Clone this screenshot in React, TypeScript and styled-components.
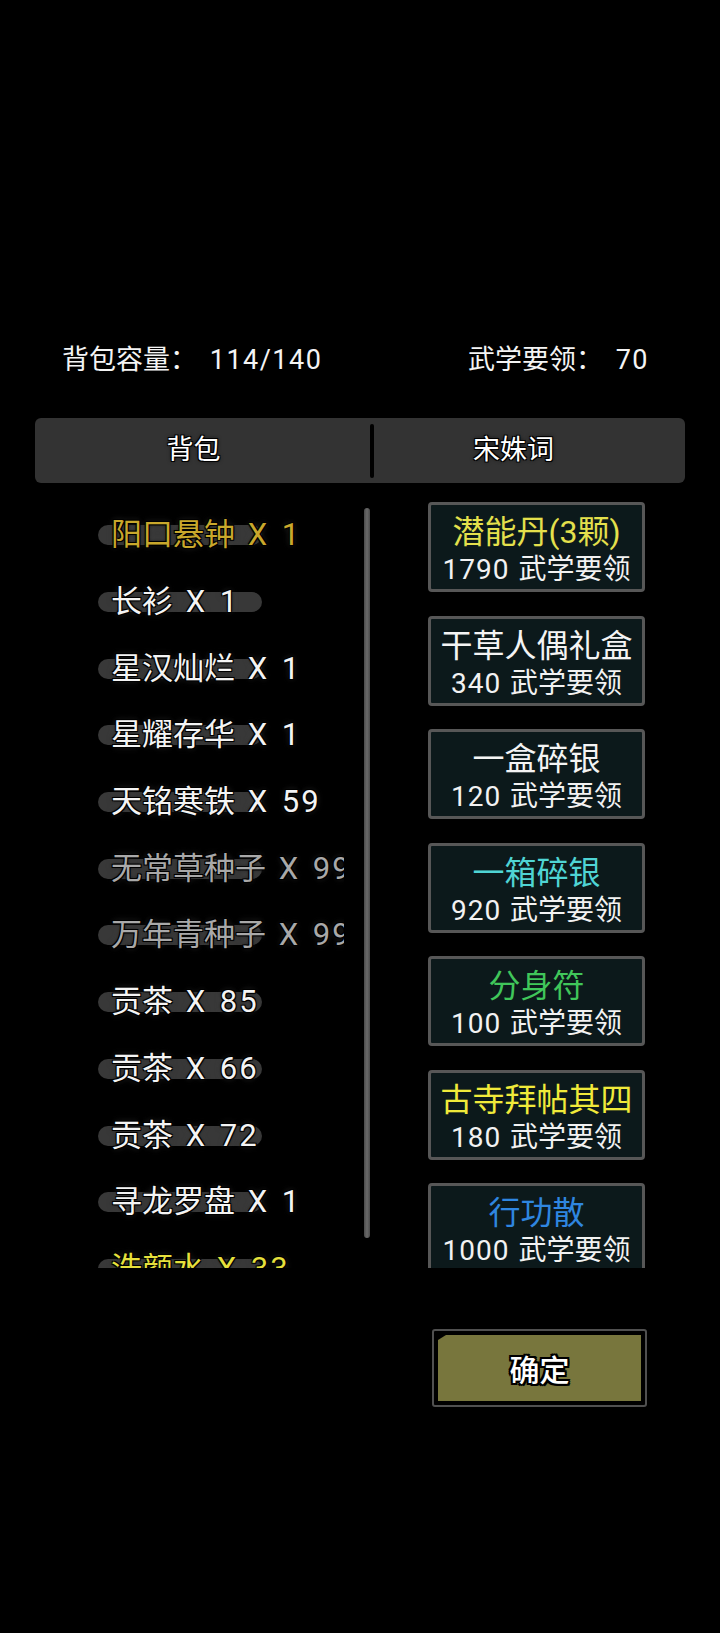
import styled, { createGlobalStyle } from 'styled-components'

const GlobalStyle = createGlobalStyle`
  html, body {
    margin: 0;
    padding: 0;
    background: #000;
  }
  body {
    font-family: Roboto, "Noto Sans CJK SC", sans-serif;
    color: #f2f2f2;
  }
  * { box-sizing: border-box; }
`

const outline = '1px 1px 0 #000, -1px -1px 0 #000, 1px -1px 0 #000, -1px 1px 0 #000, 0 0 4px rgba(0, 0, 0, 0.9)'

const Screen = styled.div`
  width: 720px;
  height: 1633px;
  background: #000;
  padding-top: 342px;
`

const InfoRow = styled.div`
  display: flex;
  justify-content: space-between;
  padding: 0 71px 0 62px;
  font-size: 27px;
  line-height: 36px;
  color: #f4f4f4;
  word-spacing: 6px;
`

// latin digits in the game font run wider than Roboto
const Num = styled.span<{ $track: number }>`
  letter-spacing: ${({ $track }) => $track}px;
`

const TabBar = styled.div`
  margin: 40px 35px 0;
  height: 65px;
  display: grid;
  grid-template-columns: 335px 4px 1fr;
  align-items: center;
  background: #333;
  border-radius: 6px;
`

const Tab = styled.div<{ $shift: number }>`
  text-align: center;
  font-size: 27px;
  line-height: 65px;
  padding-right: ${({ $shift }) => $shift}px;
  color: #fff;
  text-shadow: ${outline};
`

const TabDivider = styled.div`
  height: 54px;
  background: #000;
  border-radius: 2px;
`

const Body = styled.div`
  display: flex;
  margin-top: 19px;
  padding-left: 98px;
`

const ItemViewport = styled.div`
  width: 246px;
  height: 766px;
  overflow: hidden;
`

const ItemRow = styled.div`
  display: grid;
  height: 66.7px;
  align-items: center;
`

const ItemPill = styled.div`
  grid-area: 1 / 1;
  width: 164px;
  height: 20px;
  border-radius: 10px;
  background: #383838;
`

const ItemName = styled.div<{ $color: string }>`
  grid-area: 1 / 1;
  margin-left: 13px;
  font-size: 31px;
  line-height: 40px;
  white-space: nowrap;
  word-spacing: 3px;
  color: ${({ $color }) => $color};
  text-shadow: ${outline}, 0 0 6px rgba(110, 110, 110, 0.5);
`

const ScrollBar = styled.div`
  width: 6px;
  height: 730px;
  margin: 6px 0 0 20px;
  border-radius: 3px;
  background: linear-gradient(90deg, #4a4a4a, #6a6a6a 50%, #4a4a4a);
`

const ShopColumn = styled.div`
  width: 217px;
  height: 766px;
  margin-left: 58px;
  overflow: hidden;
`

const ShopCard = styled.div`
  height: 90px;
  margin-bottom: 23.5px;
  padding-top: 8px;
  border: 3px solid #575757;
  border-radius: 4px;
  background: #0c191b;
  text-align: center;
  white-space: nowrap;
`

const CardTitle = styled.div<{ $color: string }>`
  font-size: 32px;
  line-height: 38px;
  color: ${({ $color }) => $color};
`

const CardPrice = styled.div`
  font-size: 28px;
  line-height: 38px;
  word-spacing: 2px;
  color: #f2f2f2;
`

const Footer = styled.div`
  margin-top: 61px;
  padding-left: 432px;
`

const ConfirmButton = styled.button`
  display: block;
  width: 215px;
  height: 78px;
  padding: 4px;
  border: 2px solid #505050;
  border-radius: 3px;
  background: #000;
  cursor: pointer;
`

const ConfirmFace = styled.div`
  height: 100%;
  display: flex;
  align-items: center;
  justify-content: center;
  background: #78763d;
  clip-path: polygon(8px 0, 100% 0, 100% 100%, 0 100%, 0 5px);
  font-family: "Noto Sans CJK SC", sans-serif;
  font-size: 30px;
  font-weight: 500;
  color: #fff;
  text-shadow: 2px 2px 0 #000, -2px -2px 0 #000, 2px -2px 0 #000, -2px 2px 0 #000, 0 2px 0 #000, 2px 0 0 #000, 0 -2px 0 #000, -2px 0 0 #000;
`

const WHITE = '#f4f4f4'
const GREY = '#a9a9a9'

const items = [
  { name: '阳口悬钟', count: 1, color: '#c9a82c' },
  { name: '长衫', count: 1, color: WHITE },
  { name: '星汉灿烂', count: 1, color: WHITE },
  { name: '星耀存华', count: 1, color: WHITE },
  { name: '天铭寒铁', count: 59, color: WHITE },
  { name: '无常草种子', count: 99, color: GREY },
  { name: '万年青种子', count: 99, color: GREY },
  { name: '贡茶', count: 85, color: WHITE },
  { name: '贡茶', count: 66, color: WHITE },
  { name: '贡茶', count: 72, color: WHITE },
  { name: '寻龙罗盘', count: 1, color: WHITE },
  { name: '洗颜水', count: 33, color: '#e6e03c' },
]

const goods = [
  { title: '潜能丹(3颗)', price: 1790, color: '#e4e04c' },
  { title: '干草人偶礼盒', price: 340, color: WHITE },
  { title: '一盒碎银', price: 120, color: WHITE },
  { title: '一箱碎银', price: 920, color: '#4fd4d4' },
  { title: '分身符', price: 100, color: '#40c65a' },
  { title: '古寺拜帖其四', price: 180, color: '#f0ea3a' },
  { title: '行功散', price: 1000, color: '#2f86e0' },
]

export default function App() {
  return (
    <Screen>
      <GlobalStyle />
      <InfoRow>
        <span>背包容量： <Num $track={1.5}>114/140</Num></span>
        <span>武学要领： <Num $track={1.5}>70</Num></span>
      </InfoRow>
      <TabBar>
        <Tab $shift={18}>背包</Tab>
        <TabDivider />
        <Tab $shift={32}>宋姝词</Tab>
      </TabBar>
      <Body>
        <ItemViewport>
          {items.map((item, i) => (
            <ItemRow key={i}>
              <ItemPill />
              <ItemName $color={item.color}>
                {item.name}<Num $track={2}> X {item.count}</Num>
              </ItemName>
            </ItemRow>
          ))}
        </ItemViewport>
        <ScrollBar />
        <ShopColumn>
          {goods.map((g) => (
            <ShopCard key={g.title}>
              <CardTitle $color={g.color}>{g.title}</CardTitle>
              <CardPrice><Num $track={1}>{g.price}</Num> 武学要领</CardPrice>
            </ShopCard>
          ))}
        </ShopColumn>
      </Body>
      <Footer>
        <ConfirmButton>
          <ConfirmFace>确定</ConfirmFace>
        </ConfirmButton>
      </Footer>
    </Screen>
  )
}
